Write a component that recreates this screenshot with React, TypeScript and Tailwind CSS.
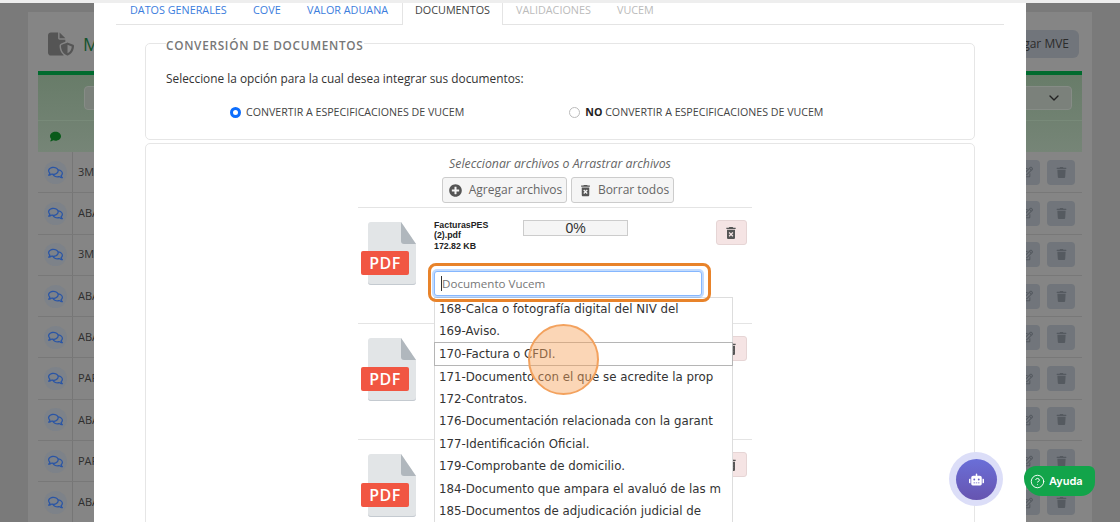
import { CircleHelp, ChevronDown } from "lucide-react";
import { FaRegComments, FaComment, FaPlusCircle, FaRobot, FaRegEdit, FaTrash } from "react-icons/fa";
import { FaFileShield } from "react-icons/fa6";
import { MdDeleteForever } from "react-icons/md";

const rows = ["3M", "ABA", "3M", "ABA", "ABA", "PAR", "ABA", "PAR", "ABA"];
const options = [
  "168-Calca o fotografía digital del NIV del",
  "169-Aviso.",
  "170-Factura o CFDI.",
  "171-Documento con el que se acredite la prop",
  "172-Contratos.",
  "176-Documentación relacionada con la garant",
  "177-Identificación Oficial.",
  "179-Comprobante de domicilio.",
  "184-Documento que ampara el avaluó de las m",
  "185-Documentos de adjudicación judicial de",
];

function PdfIcon() {
  return (
    <div className="relative w-[56px] h-[66px] shrink-0 mt-[1px]">
      <svg width="56" height="66" viewBox="0 0 56 66" className="block">
        <path d="M7 4a3 3 0 0 1 3-3h30l15 22v38a3 3 0 0 1-3 3H10a3 3 0 0 1-3-3z" fill="#e2e5e7" />
        <path d="M40 1l15 22H43a3 3 0 0 1-3-3z" fill="#b0b7bd" />
        <path d="M7 54v7a3 3 0 0 0 3 3h42a3 3 0 0 0 3-3v-1a3 3 0 0 1-3 3H10a3 3 0 0 1-3-3z" fill="#c4cad0" />
      </svg>
      <div className="absolute left-0 top-[30px] w-[48px] h-[24px] rounded-[2px] bg-[#f15642] text-white text-[16px] font-semibold leading-[24px] text-center tracking-[0.5px]">
        PDF
      </div>
    </div>
  );
}

function FileRow({ showInfo }: { showInfo: boolean }) {
  return (
    <div className="h-[116px] border-t border-[#e4e4e4] flex items-start pt-[12px] pl-[3px]">
      <PdfIcon />
      {showInfo ? (
        <div className="w-[89px] ml-[17px] text-[8.8px] leading-[10.5px] font-semibold text-[#222] font-['Liberation_Sans',sans-serif] -mt-[0.5px]">
          <div>FacturasPES</div>
          <div>(2).pdf</div>
          <div>172.82 KB</div>
        </div>
      ) : (
        <div className="w-[89px] ml-[17px]" />
      )}
      {showInfo ? (
        <div className="w-[105px] h-[16px] border border-[#ccc] bg-[#f5f5f5] text-center text-[14px] leading-[14px] text-[#333] font-['Liberation_Sans',sans-serif]">
          0%
        </div>
      ) : (
        <div className="w-[105px]" />
      )}
      <button className="ml-[88px] w-[31px] h-[25px] rounded-[3px] border border-[#e6d5d5] bg-[#f5e4e4] flex items-center justify-center text-[#555]">
        <MdDeleteForever size={16} className="-ml-[2px]" />
      </button>
    </div>
  );
}

export default function App() {
  return (
    <div className="relative w-[1120px] h-[522px] overflow-hidden bg-[#7a7a7a] font-['Open_Sans',sans-serif]">
      {/* page behind the modal */}
      <div className="pt-[12px] pl-[28px] pr-[28px] h-full">
        <div className="bg-[#858585] h-full px-[10px] overflow-hidden">
          <div className="h-[59px] flex items-center justify-between pr-[3px] pl-[10px] pt-[5px]">
            <div className="flex items-center gap-[9px]">
              <FaFileShield size={26} className="text-[#555]" />
              <span className="text-[18px] text-[#14532d]">MVE</span>
            </div>
            <button className="w-[140px] h-[28px] rounded-[6px] bg-[#71757b] text-[12px] text-[#2c2c2c] text-right pr-[10px]">
              Cargar MVE
            </button>
          </div>
          <div className="h-[4px] bg-[#006b2e]" />
          <div className="bg-gradient-to-b from-[#687c69] to-[#768577]">
            <div className="h-[46px] border-b border-[#788a79] flex items-center pl-[46px] pr-[10px]">
              <div className="w-full h-[24px] rounded-[4px] bg-[#7b817b] border border-[#868c86] flex items-center justify-end pr-[9px]">
                <ChevronDown size={16} className="text-[#222]" />
              </div>
            </div>
            <div className="h-[31px] flex items-center pl-[12px]">
              <FaComment size={11} className="text-[#0a5a1a]" />
            </div>
          </div>
          {rows.map((r, i) => (
            <div key={i} className="h-[41.3px] border-b border-[#787878] flex items-center">
              <div className="w-[35px] h-full border-r border-[#767676] flex items-center justify-center">
                <span className="w-[23px] h-[23px] rounded-full bg-[#7d8289] flex items-center justify-center">
                  <FaRegComments size={15} className="text-[#2a55a5]" />
                </span>
              </div>
              <span className="ml-[5px] text-[11px] text-[#2e2e2e]">{r}</span>
              <div className="ml-auto flex gap-[7px] pr-[7px]">
                <span className="w-[27px] h-[25px] rounded-[4px] bg-[#71757b] flex items-center justify-center text-[#555a60]">
                  <FaRegEdit size={12} />
                </span>
                <span className="w-[28px] h-[25px] rounded-[4px] bg-[#71757b] flex items-center justify-center text-[#555a60]">
                  <FaTrash size={11} />
                </span>
              </div>
            </div>
          ))}
        </div>
      </div>
      <div className="absolute inset-x-0 top-0 h-[3px] bg-[#eeeeee]" />

      {/* modal */}
      <div className="absolute left-[94px] right-[94px] top-[3px] bottom-0 bg-white overflow-hidden px-[22px]">
        <div className="flex h-[22px] border-b border-[#e4e4e4] text-[10.8px] leading-[14px] whitespace-nowrap">
          <span className="ml-[14px] w-[123px] shrink-0 text-[#3b7ddd]">DATOS GENERALES</span>
          <span className="w-[54px] shrink-0 text-[#3b7ddd]">COVE</span>
          <span className="w-[95px] shrink-0 text-[#3b7ddd]">VALOR ADUANA</span>
          <span className="w-[101px] h-[22px] shrink-0 text-center bg-white border-x border-[#e4e4e4] text-[#444]">
            DOCUMENTOS
          </span>
          <span className="ml-[13px] w-[101px] shrink-0 text-[#bbb]">VALIDACIONES</span>
          <span className="shrink-0 text-[#bbb]">VUCEM</span>
        </div>

        <div className="px-[29px] relative">
          <fieldset className="h-[105px] mt-[10px] border border-[#e6e6e6] rounded-[5px] px-[20px]">
            <legend className="px-0 text-[11.8px] font-semibold tracking-[0.7px] text-[#777] leading-[16px] translate-y-[2px]">
              CONVERSIÓN DE DOCUMENTOS
            </legend>
            <p className="text-[11.85px] leading-[18px] text-[#333] mt-[18px]">
              Seleccione la opción para la cual desea integrar sus documentos:
            </p>
            <div className="flex items-center text-[10.65px] text-[#444] mt-[18px] pl-[64px]">
              <span className="w-[11px] h-[11px] rounded-full border-[3px] border-[#0d6efd] bg-white shrink-0" />
              <span className="ml-[5px]">CONVERTIR A ESPECIFICACIONES DE VUCEM</span>
              <span className="ml-[105px] w-[11px] h-[11px] rounded-full border border-[#bbb] bg-white shrink-0" />
              <span className="ml-[5px]">
                <b className="font-bold text-[#222]">NO</b> CONVERTIR A ESPECIFICACIONES DE VUCEM
              </span>
            </div>
          </fieldset>

          <div className="mt-[3px] h-[400px] border border-[#e6e6e6] rounded-[5px] flex flex-col items-center">
            <p className="mt-[11px] text-[12.3px] leading-[17px] italic text-[#666]">
              Seleccionar archivos o Arrastrar archivos
            </p>
            <div className="flex gap-[4px] mt-[5px] mr-[4px] text-[12px] text-[#666]">
              <button className="w-[125px] h-[26px] rounded-[3px] border border-[#ccc] bg-[#f5f5f5] flex items-center justify-center gap-[7px] pl-[2px]">
                <FaPlusCircle size={13} className="text-[#555]" />
                Agregar archivos
              </button>
              <button className="w-[103px] h-[26px] rounded-[3px] border border-[#ccc] bg-[#f5f5f5] flex items-center justify-center gap-[5px] pl-[2px]">
                <MdDeleteForever size={15} className="text-[#555]" />
                Borrar todos
              </button>
            </div>
            <div className="w-[394px] mt-[4px] mr-[10px]">
              <FileRow showInfo />
              <FileRow showInfo={false} />
              <FileRow showInfo={false} />
            </div>
          </div>
        </div>

        {/* open menu, search box and highlight */}
        <div className="absolute left-[340px] top-[294px] w-[299px] h-[240px] bg-white border border-[#ddd] font-['DejaVu_Sans',sans-serif] text-[11.8px] text-[#333]">
          {options.map((o, i) => (
            <div
              key={o}
              className={
                i === 2
                  ? "h-[24px] -mt-[0.6px] -mb-[0.6px] leading-[22px] whitespace-nowrap overflow-hidden pl-[4px] -mx-[1px] border border-[#b5b5b5]"
                  : "h-[22.4px] leading-[22.4px] whitespace-nowrap overflow-hidden pl-[5px] -mx-[1px]"
              }
            >
              {o}
            </div>
          ))}
        </div>
        <div className="absolute left-[334px] top-[260px] w-[283px] h-[39px] rounded-[8px] border-[3px] border-[#e8832a] pt-[5px] pl-[3px]">
          <div className="w-[268px] h-[25px] rounded-[3px] border border-[#86b7fe] shadow-[0_0_0_2px_rgba(13,110,253,0.25)] bg-white text-[11.6px] text-[#777] leading-[24px] pl-[7px]">
            <span className="border-l border-[#333] -ml-[1px]">Documento Vucem</span>
          </div>
        </div>
        <div className="absolute left-[434px] top-[321px] w-[71px] h-[71px] rounded-full border-2 border-[#f3a25e] bg-[#f7a45e]/45" />
      </div>

      {/* floating buttons */}
      <div className="absolute left-[949px] top-[452px] w-[54px] h-[54px] rounded-full bg-[#dcdef8] flex items-center justify-center">
        <div className="w-[41px] h-[41px] rounded-full bg-gradient-to-b from-[#6a6fd8] to-[#6654b0] flex items-center justify-center text-white">
          <FaRobot size={15} />
        </div>
      </div>
      <div className="absolute left-[1024px] top-[466px] w-[71px] h-[30px] rounded-tl-[12px] rounded-tr-[6px] rounded-br-[14px] rounded-bl-[18px] bg-[#12a44a] flex items-center pl-[6px] gap-[4px] text-white text-[11px] font-semibold font-['Inter',sans-serif]">
        <CircleHelp size={15} strokeWidth={1.5} />
        Ayuda
      </div>
    </div>
  );
}
